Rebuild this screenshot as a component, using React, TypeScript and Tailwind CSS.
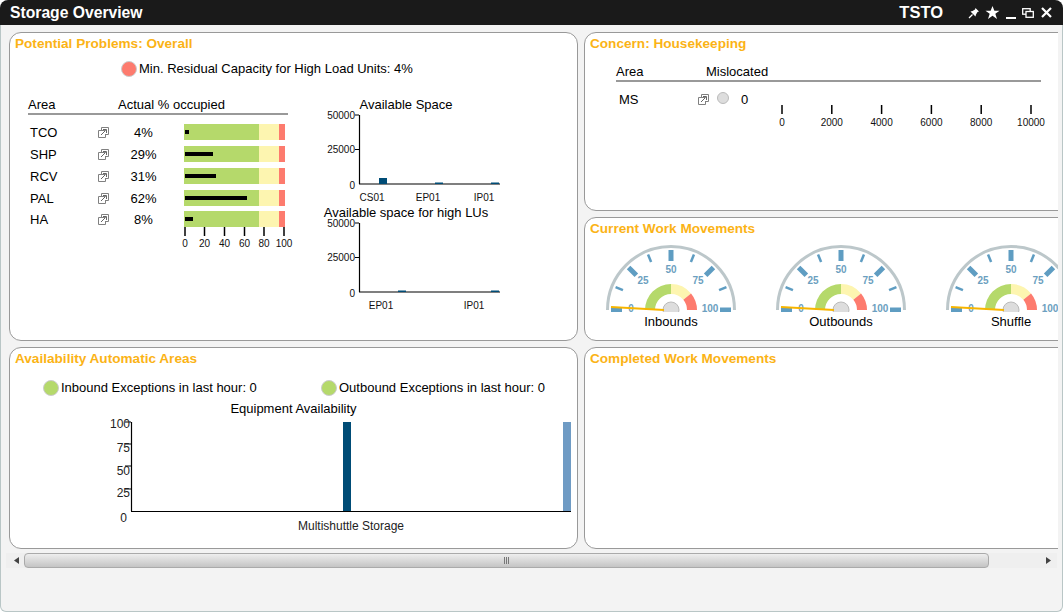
import React from 'react';

const bulletRows = [
  { area: 'TCO', pct: 4, bar: 3.7 },
  { area: 'SHP', pct: 29, bar: 28 },
  { area: 'RCV', pct: 31, bar: 30.7 },
  { area: 'PAL', pct: 62, bar: 61.7 },
  { area: 'HA', pct: 8, bar: 7.7 }
];

const PopOutIcon: React.FC = () => (
  <svg width="11" height="11" viewBox="0 0 11 11" fill="none" stroke="#808080" strokeWidth="1" className="shrink-0">
    <path d="M3.5 3.5V0.5H10.5V7.5H7.5" />
    <path d="M7.5 3.5H0.5V10.5H7.5V7" />
    <path d="M3 8L7.5 3.5M5 2.5H8.5V6" stroke="#666" />
  </svg>
);

const Panel: React.FC<{ title: string; className: string; children?: React.ReactNode }> = ({ title, className, children }) => (
  <div className={`shrink-0 rounded-xl border border-[#999] bg-white ${className}`}>
    <div className="h-5 pl-[5px] pt-px text-[13.6px] leading-5 font-bold text-[#fbb316]">{title}</div>
    {children}
  </div>
);

const StatusDot: React.FC<{ color: string }> = ({ color }) => (
  <span className="block h-4 w-4 shrink-0 rounded-full border border-[#ccc]" style={{ backgroundColor: color }} />
);

const SpaceChart: React.FC<{ top: number; bars: { label: string; labelX: number; x: number; h: number }[] }> = ({ top, bars }) => {
  const base = top + 69;
  return (
    <svg width="180" height="91" className="block overflow-visible">
      {[top, top + 34.5].map(y => (
        <line key={y} x1="35" x2="39" y1={y} y2={y} stroke="#000" />
      ))}
      <line x1="39.5" x2="39.5" y1={top} y2={base} stroke="#000" strokeWidth="1.2" />
      <line x1="39" x2="180" y1={base} y2={base} stroke="#000" strokeWidth="1.2" />
      <g fontSize="10" fill="#111" textAnchor="end">
        <text x="35" y={top + 4}>50000</text>
        <text x="35" y={top + 38}>25000</text>
        <text x="35" y={top + 74}>0</text>
      </g>
      {bars.map(b => (
        <g key={b.label}>
          <rect x={b.x} y={base - b.h} width="8" height={b.h} fill="#004c76" />
          <text x={b.labelX} y={base + 17} fontSize="10" fill="#111" textAnchor="middle">{b.label}</text>
        </g>
      ))}
    </svg>
  );
};

const polar = (r: number, value: number) => {
  const a = Math.PI * (1 - value / 100);
  return [85 + r * Math.cos(a), 67 - r * Math.sin(a)];
};

const arcBand = (from: number, to: number, r0: number, r1: number) => {
  const [ax, ay] = polar(r1, from);
  const [bx, by] = polar(r1, to);
  const [cx, cy] = polar(r0, to);
  const [dx, dy] = polar(r0, from);
  return `M${ax} ${ay}A${r1} ${r1} 0 0 1 ${bx} ${by}L${cx} ${cy}A${r0} ${r0} 0 0 0 ${dx} ${dy}Z`;
};

const Gauge: React.FC<{ label: string }> = ({ label }) => (
  <div className="w-[170px] shrink-0">
    <svg width="170" height="69" viewBox="0 0 170 69" className="block">
      <path d="M21.5 72A63.5 63.5 0 0 1 148.5 72" transform="translate(0 -5)" fill="none" stroke="#bcc7ca" strokeWidth="3" />
      {[0, 12.5, 25, 37.5, 50, 62.5, 75, 87.5, 100].map((v, i) => {
        const major = i % 2 === 0;
        const [x1, y1] = polar(major ? 49 : 52, v);
        const [x2, y2] = polar(60, v);
        return <line key={v} x1={x1} y1={y1} x2={x2} y2={y2} stroke="#5f9dc2" strokeWidth={major ? 5 : 2.5} />;
      })}
      <g fontSize="10" fontWeight="700" fill="#6c9fc0" textAnchor="middle">
        <text x="45" y="68.5">0</text>
        <text x="57" y="41">25</text>
        <text x="85" y="30">50</text>
        <text x="112" y="41">75</text>
        <text x="124" y="68.5">100</text>
      </g>
      <path d={arcBand(0, 50, 16, 26)} fill="#b5d96b" />
      <path d={arcBand(50, 78, 16, 26)} fill="#fdf5b0" />
      <path d={arcBand(78, 100, 16, 26)} fill="#fd7b6e" />
      <circle cx="85" cy="67" r="8" fill="#ddd" stroke="#bbb" />
      <line x1="25" y1="64" x2="78" y2="67" stroke="#f7b500" strokeWidth="2" />
    </svg>
    <div className="h-[18px] text-center text-[13px] leading-5 text-black">{label}</div>
  </div>
);

const ScrollArrow: React.FC<{ dir: 'left' | 'right' }> = ({ dir }) => (
  <svg width="5" height="7" viewBox="0 0 5 7" className="shrink-0">
    <path d={dir === 'left' ? 'M5 0V7L0 3.5Z' : 'M0 0V7L5 3.5Z'} fill="#444" />
  </svg>
);

export default function App() {
  return (
    <div className="flex h-[612px] w-[1063px] flex-col overflow-hidden bg-white font-['Liberation_Sans',Arial,sans-serif]">
      <div className="flex h-[25px] shrink-0 items-center rounded-t-lg bg-[#1a1a1a] pl-2.5 pr-[11px] text-white">
        <span className="text-[15.7px] font-bold">Storage Overview</span>
        <span className="ml-auto text-[16.5px] font-bold">TSTO</span>
        <svg width="12" height="12" viewBox="0 0 12 12" className="ml-[25px]" fill="#fff">
          <path d="M7.5 1L11 4.5L9.5 5L8 7.5L7.5 9.5L2.5 4.5L4.5 4L7 2.5Z" />
          <path d="M4.5 7.5L1 11" stroke="#fff" strokeWidth="1.2" />
        </svg>
        <svg width="15" height="15" viewBox="0 0 16 16" className="ml-[5px]" fill="#fff">
          <path d="M8 1L10 6H15.5L11 9.3L12.8 15L8 11.5L3.2 15L5 9.3L0.5 6H6Z" />
        </svg>
        <span className="ml-[6px] mt-[11px] block h-[2px] w-2.5 bg-white" />
        <svg width="12" height="10" viewBox="0 0 12 10" className="ml-1.5" fill="none" stroke="#fff" strokeWidth="1.3">
          <rect x="0.7" y="0.7" width="7.5" height="5.5" />
          <rect x="4" y="3.5" width="7.3" height="5.8" fill="#1a1a1a" />
        </svg>
        <svg width="11" height="11" viewBox="0 0 11 11" className="ml-[7px]" stroke="#fff" strokeWidth="2.2">
          <path d="M1 1L10 10M10 1L1 10" />
        </svg>
      </div>

      <div className="flex min-h-0 flex-1 flex-col rounded-b-md border border-t-0 border-[#b9c6c6] bg-[#f3f3f3]">
        <div className="ml-2 flex w-[1049px] gap-1.5 overflow-hidden pt-[7px]">
          <div className="flex w-[569px] shrink-0 flex-col gap-1.5">
            <Panel title="Potential Problems: Overall" className="h-[309px]">
              <div className="ml-[111px] mt-[7px] flex h-[18px] items-center gap-[2px] text-[13px]">
                <StatusDot color="#fd7b6e" />
                <span>Min. Residual Capacity for High Load Units: 4%</span>
              </div>
              <div className="mt-[17px] flex">
                <div className="ml-[18px] w-[260px] shrink-0 text-[13px]">
                  <div className="flex h-5 border-b-2 border-[#999] leading-5">
                    <span className="w-[90px]">Area</span>
                    <span>Actual % occupied</span>
                  </div>
                  <div className="mt-[9px] flex flex-col gap-1.5">
                    {bulletRows.map(row => (
                      <div key={row.area} className="flex h-4 items-center last:-mt-px">
                        <span className="w-[70px] pl-0.5 pt-0.5">{row.area}</span>
                        <PopOutIcon />
                        <span className="w-[69px] pt-0.5 text-center">{row.pct}%</span>
                        <div className="relative ml-1.5 flex h-4 w-[101px]">
                          <span className="block w-[75px] bg-[#b5d96b]" />
                          <span className="block w-5 bg-[#fdf5b0]" />
                          <span className="block w-1.5 bg-[#fd7b6e]" />
                          <span
                            className="absolute left-px top-1.5 h-1 bg-black"
                            style={{ width: `${row.bar}px` }}
                          />
                        </div>
                      </div>
                    ))}
                  </div>
                  <svg width="120" height="24" className="ml-[150px] block">
                    {[7, 26.5, 46.5, 66.5, 86, 106].map(x => (
                      <line key={x} x1={x} x2={x} y1="0" y2="9" stroke="#000" strokeWidth="1.5" />
                    ))}
                    <g fontSize="10" fill="#111" textAnchor="middle">
                      {[0, 20, 40, 60, 80, 100].map((v, i) => (
                        <text key={v} x={[7, 26.5, 46.5, 66.5, 86, 106][i]} y="20">{v}</text>
                      ))}
                    </g>
                  </svg>
                </div>
                <div className="ml-8 w-[180px] shrink-0 text-[13px]">
                  <div className="h-[18px] w-[172px] text-center leading-5">Available Space</div>
                  <SpaceChart
                    top={2}
                    bars={[
                      { label: 'CS01', labelX: 52, x: 59, h: 6 },
                      { label: 'EP01', labelX: 108, x: 115, h: 1.5 },
                      { label: 'IP01', labelX: 164, x: 171, h: 1.5 }
                    ]}
                  />
                  <div className="h-[18px] w-[172px] text-center leading-[18px]">Available space for high LUs</div>
                  <SpaceChart
                    top={1}
                    bars={[
                      { label: 'EP01', labelX: 61, x: 78, h: 1.5 },
                      { label: 'IP01', labelX: 154, x: 171, h: 1.5 }
                    ]}
                  />
                </div>
              </div>
            </Panel>

            <Panel title="Availability Automatic Areas" className="h-[202px]">
              <div className="ml-[33px] mt-[11px] flex h-[18px] items-center text-[13px]">
                <StatusDot color="#b5d96b" />
                <span className="ml-[2px] w-[260px]">Inbound Exceptions in last hour: 0</span>
                <StatusDot color="#b5d96b" />
                <span className="ml-[2px]">Outbound Exceptions in last hour: 0</span>
              </div>
              <div className="mt-[3px] h-[18px] text-center text-[13px] leading-[18px]">Equipment Availability</div>
              <svg width="566" height="120" className="block">
                {[4, 26, 48, 71].map(y => (
                  <line key={y} x1="115" x2="121" y1={y} y2={y} stroke="#000" />
                ))}
                <line x1="121.5" x2="121.5" y1="4" y2="93" stroke="#000" strokeWidth="1.2" />
                <line x1="121" x2="561" y1="93.5" y2="93.5" stroke="#000" strokeWidth="1.2" />
                <g fontSize="12" fill="#222" textAnchor="end">
                  <text x="120" y="10">100</text>
                  <text x="120" y="34">75</text>
                  <text x="120" y="57">50</text>
                  <text x="120" y="79">25</text>
                  <text x="117" y="104">0</text>
                </g>
                <rect x="333" y="4" width="8" height="89" fill="#004c76" />
                <rect x="553" y="4" width="8" height="89" fill="#6f9bc4" />
                <text x="341" y="112" fontSize="12" fill="#222" textAnchor="middle">Multishuttle Storage</text>
              </svg>
            </Panel>
          </div>

          <div className="flex w-[520px] shrink-0 flex-col gap-1.5">
            <Panel title="Concern: Housekeeping" className="h-[179px]">
              <div className="ml-[31px] mt-[9px] flex h-5 w-[425px] border-b-2 border-[#999] text-[13px] leading-5">
                <span className="w-[90px]">Area</span>
                <span>Mislocated</span>
              </div>
              <div className="ml-[31px] mt-2 flex h-[18px] items-center text-[13px]">
                <span className="w-[82px] pl-[3px] pt-0.5">MS</span>
                <PopOutIcon />
                <span className="mb-0.5 ml-2 block h-3 w-3 rounded-full border border-[#bbb] bg-[#ddd]" />
                <span className="ml-3 pt-0.5">0</span>
                <svg width="300" height="30" className="ml-0.5 mt-[42px] shrink-0">
                  {[0, 2000, 4000, 6000, 8000, 10000].map((v, i) => {
                    const x = 32 + i * 49.8;
                    return (
                      <g key={v}>
                        <line x1={x} x2={x} y1="0" y2="9" stroke="#000" strokeWidth="1.5" />
                        <text x={x} y="20.5" fontSize="10" fill="#111" textAnchor="middle">{v}</text>
                      </g>
                    );
                  })}
                </svg>
              </div>
            </Panel>

            <Panel title="Current Work Movements" className="h-[124px]">
              <div className="mt-[5px] flex pl-px">
                <Gauge label="Inbounds" />
                <Gauge label="Outbounds" />
                <Gauge label="Shuffle" />
              </div>
            </Panel>

            <Panel title="Completed Work Movements" className="h-[202px]" />
          </div>
        </div>

        <div className="ml-[5px] mt-1 flex h-[15px] w-[1051px] items-center bg-[#efefef] pl-2 pr-[6px]">
          <ScrollArrow dir="left" />
          <div className="ml-[5px] flex h-[15px] w-[965px] items-center justify-center gap-px rounded-sm border border-[#aaa] bg-gradient-to-b from-[#eeeeee] to-[#c4c4c4]">
            <span className="block h-[7px] w-px bg-[#777]" />
            <span className="block h-[7px] w-px bg-[#777]" />
            <span className="block h-[7px] w-px bg-[#777]" />
          </div>
          <span className="ml-auto">
            <ScrollArrow dir="right" />
          </span>
        </div>
      </div>
    </div>
  );
}
